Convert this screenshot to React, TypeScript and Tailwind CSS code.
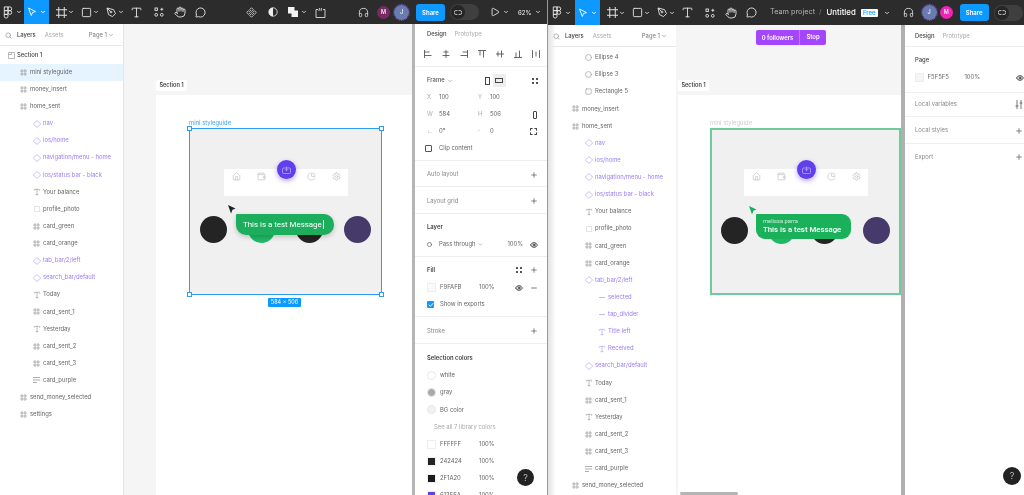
import type { ReactNode } from "react";
import {
  ChevronDown,
  Diamond,
  Type,
  Hand,
  MessageCircle,
  Play,
  Headphones,
  Eye,
  Plus,
  Minus,
  Search,
  Circle,
  Square,
  Home,
  Wallet,
  PieChart,
  Settings,
  Check,
} from "lucide-react";

type Kind = "section" | "frame" | "comp" | "text" | "dash" | "lines" | "ellipse" | "rect" | "line";
type Layer = { name: string; kind: Kind; level: number; purple?: boolean; active?: boolean; dark?: boolean };

const leftLayers: Layer[] = [
  { name: "Section 1", kind: "section", level: 0, dark: true },
  { name: "mini styleguide", kind: "frame", level: 1, active: true },
  { name: "money_insert", kind: "frame", level: 1 },
  { name: "home_sent", kind: "frame", level: 1 },
  { name: "nav", kind: "comp", level: 2, purple: true },
  { name: "ios/home", kind: "comp", level: 2, purple: true },
  { name: "navigation/menu - home", kind: "comp", level: 2, purple: true },
  { name: "ios/status bar - black", kind: "comp", level: 2, purple: true },
  { name: "Your balance", kind: "text", level: 2 },
  { name: "profile_photo", kind: "dash", level: 2 },
  { name: "card_green", kind: "frame", level: 2 },
  { name: "card_orange", kind: "frame", level: 2 },
  { name: "tab_bar/2/left", kind: "comp", level: 2, purple: true },
  { name: "search_bar/default", kind: "comp", level: 2, purple: true },
  { name: "Today", kind: "text", level: 2 },
  { name: "card_sent_1", kind: "frame", level: 2 },
  { name: "Yesterday", kind: "text", level: 2 },
  { name: "card_sent_2", kind: "frame", level: 2 },
  { name: "card_sent_3", kind: "frame", level: 2 },
  { name: "card_purple", kind: "lines", level: 2 },
  { name: "send_money_selected", kind: "frame", level: 1 },
  { name: "settings", kind: "frame", level: 1 },
];

const rightLayers: Layer[] = [
  { name: "Ellipse 4", kind: "ellipse", level: 2 },
  { name: "Ellipse 3", kind: "ellipse", level: 2 },
  { name: "Rectangle 5", kind: "rect", level: 2 },
  { name: "money_insert", kind: "frame", level: 1 },
  { name: "home_sent", kind: "frame", level: 1 },
  { name: "nav", kind: "comp", level: 2, purple: true },
  { name: "ios/home", kind: "comp", level: 2, purple: true },
  { name: "navigation/menu - home", kind: "comp", level: 2, purple: true },
  { name: "ios/status bar - black", kind: "comp", level: 2, purple: true },
  { name: "Your balance", kind: "text", level: 2 },
  { name: "profile_photo", kind: "dash", level: 2 },
  { name: "card_green", kind: "frame", level: 2 },
  { name: "card_orange", kind: "frame", level: 2 },
  { name: "tab_bar/2/left", kind: "comp", level: 2, purple: true },
  { name: "selected", kind: "line", level: 3, purple: true },
  { name: "tap_divider", kind: "line", level: 3, purple: true },
  { name: "Title left", kind: "text", level: 3, purple: true },
  { name: "Received", kind: "text", level: 3, purple: true },
  { name: "search_bar/default", kind: "comp", level: 2, purple: true },
  { name: "Today", kind: "text", level: 2 },
  { name: "card_sent_1", kind: "frame", level: 2 },
  { name: "Yesterday", kind: "text", level: 2 },
  { name: "card_sent_2", kind: "frame", level: 2 },
  { name: "card_sent_3", kind: "frame", level: 2 },
  { name: "card_purple", kind: "lines", level: 2 },
  { name: "send_money_selected", kind: "frame", level: 1 },
];

function Logo() {
  return (
    <svg width="10" height="13" viewBox="0 0 10 14" fill="none" stroke="#e5e5e5" strokeWidth="1">
      <path d="M1 1h4v4H1zM5 1h2a2 2 0 0 1 0 4H5zM1 5h4v4H1zM7 5a2 2 0 1 1 0 4 2 2 0 0 1 0-4zM1 9h4v2a2 2 0 0 1-4 0z" />
    </svg>
  );
}

function MoveIcon() {
  return (
    <svg width="10" height="10" viewBox="0 0 10 10" fill="none" stroke="#fff" strokeWidth="0.9">
      <path d="M1.5 1l7 3.600-3 .9-1.200 3z" />
    </svg>
  );
}

function FrameIcon() {
  return (
    <svg width="11" height="11" viewBox="0 0 10 10" fill="none" stroke="#e5e5e5" strokeWidth="0.9">
      <path d="M2.500 0v10M7.500 0v10M0 2.500h10M0 7.500h10" />
    </svg>
  );
}

function PenIcon() {
  return (
    <svg width="11" height="11" viewBox="0 0 11 11" fill="none" stroke="#e5e5e5" strokeWidth="0.9">
      <path d="M1 1l6.500 1.600 2 4-3 3-4-2zM1 1l3.400 3.400" />
      <circle cx="5" cy="5" r="0.9" />
    </svg>
  );
}

function ResourcesIcon() {
  return (
    <svg width="10" height="10" viewBox="0 0 10 10" fill="none" stroke="#e5e5e5" strokeWidth="0.9">
      <circle cx="2.200" cy="7.800" r="1.400" />
      <circle cx="7.800" cy="7.800" r="1.400" />
      <rect x="1" y="1" width="2.400" height="2.400" />
      <path d="M7.800 0.800v3M6.300 2.300h3" />
    </svg>
  );
}

function ComponentIcon() {
  return (
    <svg width="11" height="11" viewBox="0 0 12 12" fill="none" stroke="#ddd" strokeWidth="0.9">
      <path d="M6 .8l2 2-2 2-2-2zM6 7.200l2 2-2 2-2-2zM2.800 4l2 2-2 2-2-2zM9.200 4l2 2-2 2-2-2z" />
    </svg>
  );
}

function ContrastIcon() {
  return (
    <svg width="10" height="10" viewBox="0 0 10 10">
      <circle cx="5" cy="5" r="4.200" fill="#2c2c2c" stroke="#eee" strokeWidth="0.8" />
      <path d="M5 .8a4.200 4.200 0 0 0 0 8.400z" fill="#eee" />
    </svg>
  );
}

function BoolIcon() {
  return (
    <svg width="10" height="10" viewBox="0 0 10 10" fill="#f2f2f2">
      <rect x="0" y="0" width="6.500" height="6.500" />
      <rect x="3.500" y="3.500" width="6.500" height="6.500" />
    </svg>
  );
}

function CropIcon() {
  return (
    <svg width="11" height="11" viewBox="0 0 11 11" fill="none" stroke="#ddd" strokeWidth="0.9">
      <path d="M1 2.500v8h9V2.500H8M1 2.500h2" />
      <path d="M4.500 1L4 4M6.500 1L6 4" />
    </svg>
  );
}

function SmallChev({ className = "text-[#cfcfcf]" }: { className?: string }) {
  return <ChevronDown size={6} strokeWidth={1} absoluteStrokeWidth className={`shrink-0 ${className}`} />;
}

function Tool({ children, w, chev, blue }: { children: ReactNode; w: string; chev?: boolean; blue?: boolean }) {
  return (
    <div className={`${w} ${blue ? "bg-[#0d99ff]" : ""} h-full flex items-center justify-center gap-[3px] shrink-0`}>
      {children}
      {chev && <SmallChev className={blue ? "text-white" : "text-[#cfcfcf]"} />}
    </div>
  );
}

function ChevTool({ children }: { children: ReactNode }) {
  return (
    <div className="w-[25px] h-full flex items-center pl-[6px] gap-[1px] shrink-0">
      <div className="w-[12px] flex justify-center">{children}</div>
      <SmallChev />
    </div>
  );
}

function ShareBtn() {
  return (
    <div className="w-[29px] h-[17px] rounded-[3px] bg-[#0d99ff] text-white text-[6px] font-semibold flex items-center justify-center shrink-0">
      Share
    </div>
  );
}

function DevToggle() {
  return (
    <div className="w-[29px] h-[16px] rounded-full bg-[#3f3f3f] flex items-center pl-[1px] shrink-0">
      <div className="w-[14px] h-[14px] rounded-full bg-[#262626] flex items-center justify-center">
        <svg width="8" height="5" viewBox="0 0 8 5" fill="none" stroke="#ddd" strokeWidth="0.8">
          <path d="M3.500 .6H2a1.900 1.900 0 0 0 0 3.800h1.500M4.500 .6H6a1.900 1.900 0 0 1 0 3.800H4.500" />
        </svg>
      </div>
    </div>
  );
}

function Avatar({ letter, color, ring }: { letter: string; color: string; ring?: boolean }) {
  return (
    <div
      className={`${color} ${ring ? "w-[15px] h-[15px] outline-1 outline-dotted outline-[#7c4fe0]" : "w-[13px] h-[13px]"} rounded-full text-white text-[5.500px] font-medium flex items-center justify-center shrink-0`}
    >
      {letter}
    </div>
  );
}

function DrawTools() {
  const ic = "text-[#e5e5e5]";
  return (
    <>
      <ChevTool><FrameIcon /></ChevTool>
      <ChevTool><Square size={11} strokeWidth={0.9} absoluteStrokeWidth className={ic} /></ChevTool>
      <ChevTool><PenIcon /></ChevTool>
      <Tool w="w-[24px]"><Type size={13} strokeWidth={0.9} absoluteStrokeWidth className={ic} /></Tool>
      <Tool w="w-[21px]"><ResourcesIcon /></Tool>
      <Tool w="w-[21px]"><Hand size={12} strokeWidth={0.9} absoluteStrokeWidth className={ic} /></Tool>
      <Tool w="w-[21px]"><MessageCircle size={11} strokeWidth={0.9} absoluteStrokeWidth className={ic} /></Tool>
    </>
  );
}

function LeftToolbar() {
  return (
    <div className="h-6 bg-[#2c2c2c] flex items-center shrink-0">
      <Tool w="w-[24px]" chev><Logo /></Tool>
      <Tool w="w-[25px]" chev blue><MoveIcon /></Tool>
      <DrawTools />
      <div className="w-[29px]" />
      <Tool w="w-[22px]"><ComponentIcon /></Tool>
      <Tool w="w-[22px]"><ContrastIcon /></Tool>
      <Tool w="w-[26px]" chev><BoolIcon /></Tool>
      <Tool w="w-[20px]"><CropIcon /></Tool>
      <div className="w-[28px]" />
      <Headphones size={11} strokeWidth={0.9} absoluteStrokeWidth className="text-[#d8d8d8] shrink-0" />
      <div className="w-[8px]" />
      <Avatar letter="M" color="bg-[#7a2a63]" />
      <div className="w-[4px]" />
      <Avatar letter="J" color="bg-[#6a7bb0]" ring />
      <div className="w-[7px]" />
      <ShareBtn />
      <div className="w-[5px]" />
      <DevToggle />
      <div className="w-[11px]" />
      <Play size={10} strokeWidth={0.9} absoluteStrokeWidth className="text-[#e5e5e5] shrink-0" />
      <div className="w-[3px]" />
      <SmallChev />
      <div className="w-[9px]" />
      <span className="text-[#e5e5e5] text-[6px] font-medium shrink-0">62%</span>
      <div className="w-[4px]" />
      <SmallChev />
    </div>
  );
}

function RightToolbar() {
  return (
    <div className="h-[25px] bg-[#2c2c2c] flex items-center shrink-0">
      <Tool w="w-[27px]" chev><Logo /></Tool>
      <Tool w="w-[25px]" chev blue><MoveIcon /></Tool>
      <DrawTools />
      <span className="ml-[8px] text-[#b4b4b4] text-[7.300px] shrink-0">Team project</span>
      <span className="ml-[4px] text-[#777] text-[7px] shrink-0">/</span>
      <span className="ml-[5px] text-white text-[7.800px] font-medium shrink-0">Untitled</span>
      <span className="ml-[5px] w-[17px] h-[8px] rounded-[1px] bg-white text-[#0d99ff] text-[6px] font-medium flex items-center justify-center shrink-0">Free</span>
      <SmallChev className="text-[#cfcfcf] ml-[6px]" />
      <Headphones size={11} strokeWidth={0.9} absoluteStrokeWidth className="text-[#d8d8d8] ml-[13px] shrink-0" />
      <div className="w-[8px]" />
      <Avatar letter="J" color="bg-[#6a7bb0]" ring />
      <div className="w-[3px]" />
      <Avatar letter="M" color="bg-[#f024b4]" />
      <div className="w-[7px]" />
      <ShareBtn />
      <div className="w-[5px]" />
      <DevToggle />
    </div>
  );
}

function LayerIcon({ kind, purple }: { kind: Kind; purple?: boolean }) {
  const c = purple ? "text-[#b9a3f5]" : "text-[#a0a0a0]";
  if (kind === "section")
    return (
      <svg width="7" height="7" viewBox="0 0 7 7" fill="none" stroke="#8a8a8a" strokeWidth="0.6">
        <path d="M.5.5h6v6h-6zM.5 2.500h3v-2" />
      </svg>
    );
  if (kind === "frame")
    return (
      <svg width="7" height="7" viewBox="0 0 7 7" fill="none" stroke="#999" strokeWidth="0.7">
        <path d="M2 0v7M5 0v7M0 2h7M0 5h7" />
      </svg>
    );
  if (kind === "comp") return <Diamond size={8} strokeWidth={0.7} absoluteStrokeWidth className={c} />;
  if (kind === "text") return <Type size={8} strokeWidth={0.7} absoluteStrokeWidth className={c} />;
  if (kind === "ellipse") return <Circle size={7} strokeWidth={0.7} absoluteStrokeWidth className={c} />;
  if (kind === "rect") return <Square size={7} strokeWidth={0.7} absoluteStrokeWidth className={c} />;
  if (kind === "dash")
    return (
      <svg width="6" height="6" viewBox="0 0 6 6" fill="none" stroke="#aaa" strokeWidth="0.6" strokeDasharray="1 1">
        <rect x=".5" y=".5" width="5" height="5" />
      </svg>
    );
  if (kind === "line") return <div className="w-[6px] h-px bg-[#c9b8f7]" />;
  return (
    <svg width="7" height="6" viewBox="0 0 7 6" stroke="#8a8a8a" strokeWidth="0.7">
      <path d="M0 .5h7M0 3h7M0 5.500h4" />
    </svg>
  );
}

function LayerRow({ layer, wide }: { layer: Layer; wide?: boolean }) {
  const col = wide
    ? layer.level === 1
      ? "w-[34px] pl-[21px]"
      : layer.level === 2
        ? "w-[47px] pl-[34px]"
        : "w-[60px] pl-[47px]"
    : layer.level === 0
      ? "w-[17px] pl-[5px]"
      : layer.level === 1
        ? "w-[30px] pl-[17px]"
        : "w-[43px] pl-[30px]";
  return (
    <div
      className={`h-[17.140px] flex items-center shrink-0 ${layer.active ? "bg-[#e5f4ff]" : ""} ${layer.purple ? "text-[#9a7cf0]" : layer.dark ? "text-[#444] font-medium" : "text-[#666]"}`}
    >
      <div className={`${col} flex justify-center`}>
        <LayerIcon kind={layer.kind} purple={layer.purple} />
      </div>
      <span className="text-[5.900px] whitespace-nowrap">{layer.name}</span>
    </div>
  );
}

function LayerTabs() {
  return (
    <div className="h-[22px] border-b border-[#e8e8e8] flex items-center shrink-0 text-[5.900px] pt-px">
      <Search size={7} strokeWidth={0.7} absoluteStrokeWidth className="ml-[5px] text-[#999]" />
      <span className="ml-[5px] font-medium text-[#444]">Layers</span>
      <span className="ml-[9px] text-[#aaa]">Assets</span>
      <span className="ml-auto text-[#777]">Page 1</span>
      <ChevronDown size={6} strokeWidth={0.8} absoluteStrokeWidth className="ml-[1px] mr-[9px] text-[#999]" />
    </div>
  );
}

function Circles({ xs }: { xs: string[] }) {
  const colors = ["bg-[#242424]", "bg-[#20b866]", "bg-[#242424]", "bg-[#463a6b]"];
  return (
    <>
      {xs.map((x, i) => (
        <div key={x} className={`absolute top-[87px] w-[27px] h-[27px] rounded-full ${colors[i]} ${x}`} />
      ))}
    </>
  );
}

function NavBar({ className }: { className: string }) {
  const icon = "text-[#b9b9b9]";
  return (
    <div className={`absolute top-[40px] w-[124px] h-[27px] bg-white flex pt-[3px] ${className}`}>
      <div className="w-[25px] flex justify-center"><Home size={9} strokeWidth={0.6} absoluteStrokeWidth className={icon} /></div>
      <div className="w-[25px] flex justify-center"><Wallet size={9} strokeWidth={0.6} absoluteStrokeWidth className={icon} /></div>
      <div className="w-[25px]" />
      <div className="w-[25px] flex justify-center"><PieChart size={9} strokeWidth={0.6} absoluteStrokeWidth className={icon} /></div>
      <div className="w-[24px] flex justify-center"><Settings size={9} strokeWidth={0.6} absoluteStrokeWidth className={icon} /></div>
      <div className="absolute left-[52.500px] -top-[9px] w-[19px] h-[19px] rounded-full bg-[#613fea] shadow-[0_2px_5px_rgba(97,63,234,0.45)] flex items-center justify-center">
        <ComponentGlyph />
      </div>
    </div>
  );
}

function ComponentGlyph() {
  return (
    <svg width="9" height="8" viewBox="0 0 9 8" fill="none" stroke="#cfc4ff" strokeWidth="0.6">
      <rect x=".5" y="2" width="8" height="5.500" rx="1" />
      <path d="M4.500 .5v4M3 3.200l1.500 1.500L6 3.200" />
    </svg>
  );
}

function Handle({ className }: { className: string }) {
  return <div className={`absolute w-[5px] h-[5px] bg-white border border-[#2f9bf0] ${className}`} />;
}

function SectionLabel({ className }: { className: string }) {
  return (
    <div className={`absolute top-[56px] w-[31px] h-[11px] bg-white rounded-[2px] text-[#444] text-[5.600px] font-semibold flex items-center justify-center ${className}`}>
      Section 1
    </div>
  );
}

function LeftCanvas() {
  return (
    <div className="relative w-[291px] bg-[#f5f5f5] shrink-0 overflow-hidden">
      <div className="absolute left-[32px] top-[71px] right-0 bottom-0 bg-white" />
      <SectionLabel className="left-[32px]" />
      <span className="absolute left-[65px] top-[95px] text-[#3ea3f2] text-[5.900px]">mini styleguide</span>
      <div className="absolute left-[65px] top-[104px] w-[193px] h-[167px] bg-[#f0f0f0] border border-[#2f9bf0]">
        <NavBar className="left-[34px]" />
        <Circles xs={["left-[10px]", "left-[58px]", "left-[106px]", "left-[154px]"]} />
        <div className="absolute left-[46px] top-[85px] w-[98px] h-[21px] bg-[#1cae5c] rounded-[10px] rounded-tl-[1px] shadow-[0_2px_5px_rgba(0,0,0,0.2)] text-white text-[7.900px] flex items-center pl-[7px] font-['Roboto',sans-serif]">
          This is a test Message
          <span className="ml-px w-px h-[9px] bg-white" />
        </div>
        <svg className="absolute left-[38px] top-[76px]" width="8" height="9" viewBox="0 0 8 9" fill="#222">
          <path d="M0 0l7.500 3.500-3 1.200L3 8.500z" />
        </svg>
        <Handle className="-left-[3px] -top-[3px]" />
        <Handle className="-right-[3px] -top-[3px]" />
        <Handle className="-left-[3px] -bottom-[3px]" />
        <Handle className="-right-[3px] -bottom-[3px]" />
      </div>
      <div className="absolute left-[144px] top-[274px] w-[33px] h-[9px] rounded-[1px] bg-[#0d99ff] text-white text-[5.500px] flex items-center justify-center">
        584 × 506
      </div>
      <div className="absolute right-0 top-0 bottom-0 w-[3px] bg-[#b5b5b5]" />
    </div>
  );
}

function RightCanvas() {
  return (
    <div className="relative w-[229px] bg-[#f5f5f5] shrink-0 overflow-hidden">
      <div className="absolute left-[2px] top-[70px] right-0 bottom-0 bg-white" />
      <SectionLabel className="left-[2px] !top-[55px]" />
      <div className="absolute left-[80px] top-[5px] w-[70px] h-[15px] rounded-[2px] bg-[#a445ff] text-white text-[5.900px] font-semibold flex items-center">
        <span className="w-[44px] text-center border-r border-[#c07dff] leading-[15px]">0 followers</span>
        <span className="flex-1 text-center">Stop</span>
      </div>
      <span className="absolute left-[34px] top-[94px] text-[#cfcfcf] text-[5.900px]">mini styleguide</span>
      <div className="absolute left-[34px] top-[103px] w-[191px] h-[167px] bg-[#f0f0f0] border-2 border-[#6fcb9b]">
        <NavBar className="left-[32px] !top-[39px]" />
        <Circles xs={["left-[9px]", "left-[56px]", "left-[99px]", "left-[151px]"]} />
        <div className="absolute left-[44px] top-[84px] w-[95px] h-[25px] bg-[#1ab15a] rounded-[9px] rounded-tl-[1px] text-white flex flex-col justify-center pl-[7px] font-['Roboto',sans-serif]">
          <span className="text-[5.800px] leading-[7px] text-[#cdeedb]">melissa parra</span>
          <span className="text-[7.800px] leading-[10px] font-medium">This is a test Message</span>
        </div>
        <svg className="absolute left-[37px] top-[76px]" width="8" height="9" viewBox="0 0 8 9" fill="#1cae5c">
          <path d="M0 0l7.500 3.500-3 1.200L3 8.500z" />
        </svg>
      </div>
      <div className="absolute right-0 top-0 bottom-0 w-[4px] bg-[#b0b0b0]" />
      <div className="absolute left-[4px] bottom-0 w-[58px] h-[3px] bg-[#b5b5b5] rounded-full" />
    </div>
  );
}

function PanelTabs() {
  return (
    <div className="h-[21px] flex items-center pl-[12px] gap-[8px] text-[5.900px] shrink-0">
      <span className="font-medium text-[#444]">Design</span>
      <span className="text-[#aaa]">Prototype</span>
    </div>
  );
}

function Prop({ label, value, w = "w-[51px]" }: { label: string; value: string; w?: string }) {
  return (
    <div className={`${w} flex items-center`}>
      <span className="w-[12px] text-[#aaa]">{label}</span>
      <span className="text-[#666]">{value}</span>
    </div>
  );
}

function AlignIcon({ d }: { d: string }) {
  return (
    <svg width="8" height="8" viewBox="0 0 8 8" stroke="#444" strokeWidth="0.8" fill="none">
      <path d={d} />
    </svg>
  );
}

function PlusBtn() {
  return <Plus size={8} strokeWidth={0.7} absoluteStrokeWidth className="text-[#555]" />;
}

function EyeBtn() {
  return <Eye size={8} strokeWidth={0.9} absoluteStrokeWidth className="text-[#333]" />;
}

function Head({ title, children, muted }: { title: string; children?: ReactNode; muted?: boolean }) {
  return (
    <div className="h-[17.140px] flex items-center justify-between pl-[12px] pr-[9px] shrink-0">
      <span className={muted ? "text-[#888]" : "text-[#444] font-semibold"}>{title}</span>
      {children}
    </div>
  );
}

function Swatch({ hex, color, opacity = "100%" }: { hex: string; color: string; opacity?: string }) {
  return (
    <div className="h-[17.140px] flex items-center pl-[12px] shrink-0">
      <div className={`w-[9px] h-[9px] border border-[#eee] ${color}`} />
      <span className="ml-[4px] w-[39px] text-[#666]">{hex}</span>
      <span className="text-[#666]">{opacity}</span>
    </div>
  );
}

function ColorStyle({ name, color }: { name: string; color: string }) {
  return (
    <div className="h-[17.140px] flex items-center pl-[12px] shrink-0 text-[#666]">
      <div className={`w-[9px] h-[9px] rounded-full border border-[#e8e8e8] ${color}`} />
      <span className="ml-[4px]">{name}</span>
    </div>
  );
}

function FourDots() {
  return (
    <div className="grid grid-cols-2 gap-[2px]">
      <div className="w-[2px] h-[2px] bg-[#555]" />
      <div className="w-[2px] h-[2px] bg-[#555]" />
      <div className="w-[2px] h-[2px] bg-[#555]" />
      <div className="w-[2px] h-[2px] bg-[#555]" />
    </div>
  );
}

function LeftDesignPanel() {
  return (
    <div className="relative flex-1 bg-white text-[5.900px] overflow-hidden">
      <PanelTabs />
      <div className="h-[22px] border-b border-[#eee] flex items-start pt-[5px] pl-[9px] gap-[10px]">
        <AlignIcon d="M.5 0v8M.5 2h5M.5 5.500h7" />
        <AlignIcon d="M4 0v8M1.500 2h5M.5 5.500h7" />
        <AlignIcon d="M7.500 0v8M2.500 2h5M.5 5.500h7" />
        <AlignIcon d="M0 .5h8M2 .5v5M5.500 .5v7" />
        <AlignIcon d="M0 4h8M2 1.500v5M5.500 .5v7" />
        <AlignIcon d="M0 7.500h8M2 2.500v5M5.500 .5v7" />
        <AlignIcon d="M.5 0v8M7.500 0v8M4 1.500v5" />
      </div>
      <div className="h-[94px] border-b border-[#eee] pt-[5px]">
        <div className="h-[17px] flex items-center pl-[12px] pr-[9px] text-[#555]">
          <span className="font-medium">Frame</span>
          <ChevronDown size={6} strokeWidth={0.8} absoluteStrokeWidth className="ml-[2px] text-[#aaa]" />
          <div className="ml-[32px] w-[5px] h-[8px] border border-[#444]" />
          <div className="ml-[3px] w-[13px] h-[13px] bg-[#eee] rounded-[1px] flex items-center justify-center">
            <div className="w-[8px] h-[5px] border border-[#444]" />
          </div>
          <div className="ml-auto"><FourDots /></div>
        </div>
        <div className="h-[17px] flex items-center pl-[12px]">
          <Prop label="X" value="100" />
          <Prop label="Y" value="100" />
        </div>
        <div className="h-[17px] flex items-center pl-[12px]">
          <Prop label="W" value="584" />
          <Prop label="H" value="506" />
          <div className="ml-auto mr-[10px] w-[4px] h-[8px] border border-[#444] rounded-[1px]" />
        </div>
        <div className="h-[17px] flex items-center pl-[12px]">
          <Prop label="∟" value="0°" />
          <Prop label="◜" value="0" />
          <div className="ml-auto mr-[10px] w-[7px] h-[7px] border border-dashed border-[#444] rounded-[1px]" />
        </div>
        <div className="h-[17px] flex items-center pl-[10px] text-[#666]">
          <div className="w-[7px] h-[7px] border border-[#555] rounded-[1px]" />
          <span className="ml-[7px]">Clip content</span>
        </div>
      </div>
      <div className="h-[26px] border-b border-[#eee] flex items-center pt-[2px]">
        <div className="w-full"><Head title="Auto layout" muted><PlusBtn /></Head></div>
      </div>
      <div className="h-[27px] border-b border-[#eee] flex items-center pt-[2px]">
        <div className="w-full"><Head title="Layout grid" muted><PlusBtn /></Head></div>
      </div>
      <div className="h-[43px] border-b border-[#eee] flex flex-col justify-center pt-[2px]">
        <Head title="Layer" />
        <div className="h-[17px] flex items-center pl-[12px] pr-[9px] text-[#666]">
          <Circle size={5} strokeWidth={0.7} absoluteStrokeWidth className="text-[#666]" />
          <span className="ml-[7px]">Pass through</span>
          <ChevronDown size={5} strokeWidth={0.8} absoluteStrokeWidth className="ml-[2px] text-[#aaa]" />
          <span className="ml-auto mr-[7px]">100%</span>
          <EyeBtn />
        </div>
      </div>
      <div className="h-[60px] border-b border-[#eee] flex flex-col justify-center pt-[2px]">
        <Head title="Fill">
          <div className="flex items-center gap-[8px]">
            <FourDots />
            <PlusBtn />
          </div>
        </Head>
        <div className="relative">
          <Swatch hex="F9FAFB" color="bg-[#f9fafb]" />
          <div className="absolute right-[9px] top-[4.500px] flex items-center gap-[7px]">
            <EyeBtn />
            <Minus size={8} strokeWidth={0.7} absoluteStrokeWidth className="text-[#444]" />
          </div>
        </div>
        <div className="h-[17px] flex items-center pl-[12px] text-[#666]">
          <div className="w-[7px] h-[7px] rounded-[1px] bg-[#0d99ff] flex items-center justify-center">
            <Check size={6} strokeWidth={1} absoluteStrokeWidth className="text-white" />
          </div>
          <span className="ml-[6px]">Show in exports</span>
        </div>
      </div>
      <div className="h-[27px] border-b border-[#eee] flex items-center pt-[2px]">
        <div className="w-full"><Head title="Stroke" muted><PlusBtn /></Head></div>
      </div>
      <div className="pt-[6px]">
        <Head title="Selection colors" />
        <ColorStyle name="white" color="bg-white" />
        <ColorStyle name="gray" color="bg-[#a9a9a9]" />
        <ColorStyle name="BG color" color="bg-[#f2f2f2]" />
        <div className="h-[17.140px] flex items-center pl-[19px] text-[#aaa]">See all 7 library colors</div>
        <Swatch hex="FFFFFF" color="bg-white" />
        <Swatch hex="242424" color="bg-[#242424]" />
        <Swatch hex="2F1A20" color="bg-[#1f1a20]" />
        <Swatch hex="613FEA" color="bg-[#613fea]" />
      </div>
      <div className="absolute left-[102px] top-[445px] w-[17px] h-[17px] rounded-full bg-[#222] text-[#bbb] text-[9px] flex items-center justify-center">?</div>
    </div>
  );
}

function RightDesignPanel() {
  return (
    <div className="relative flex-1 bg-white text-[5.900px] overflow-hidden">
      <div className="h-[22px] border-b border-[#eee] flex items-center pl-[10px] gap-[8px] pt-[1px] shrink-0">
        <span className="font-medium text-[#444]">Design</span>
        <span className="text-[#aaa]">Prototype</span>
      </div>
      <div className="h-[46px] border-b border-[#eee] pt-[5px] pl-[10px]">
        <div className="h-[17px] flex items-center text-[#444] font-medium">Page</div>
        <div className="h-[17px] flex items-center text-[#666]">
          <div className="w-[9px] h-[9px] bg-[#f5f5f5] border border-[#eee]" />
          <span className="ml-[4px] w-[39px]">F5F5F5</span>
          <span>100%</span>
          <div className="ml-[36px]"><EyeBtn /></div>
        </div>
      </div>
      <div className="h-[24px] border-b border-[#eee] flex items-center pl-[10px] pr-[1px] justify-between text-[#888]">
        <span>Local variables</span>
        <svg width="8" height="9" viewBox="0 0 8 9" fill="none" stroke="#555" strokeWidth="0.8">
          <path d="M2 0v9M6 0v9M.5 6h3M4.500 3h3" />
        </svg>
      </div>
      <div className="h-[27px] border-b border-[#eee] flex items-center pl-[10px] pr-[1px] justify-between text-[#888] pt-px">
        <span>Local styles</span>
        <PlusBtn />
      </div>
      <div className="h-[26px] flex items-center pl-[10px] pr-[1px] justify-between text-[#888]">
        <span>Export</span>
        <PlusBtn />
      </div>
      <div className="absolute left-[98px] top-[442px] w-[18px] h-[18px] rounded-full bg-[#222] text-[#bbb] text-[9px] flex items-center justify-center">?</div>
    </div>
  );
}

export default function App() {
  return (
    <div className="w-[1024px] h-[495px] flex overflow-hidden bg-white font-['Inter',sans-serif] blur-[0.3px]">
      {/* first browser window */}
      <div className="w-[548px] h-full flex flex-col shrink-0 border-r border-[#999]">
        <LeftToolbar />
        <div className="flex flex-1 min-h-0">
          <div className="w-[124px] bg-white border-r border-[#e5e5e5] shrink-0 overflow-hidden">
            <LayerTabs />
            <div className="pt-[0.500px]">
              {leftLayers.map((l) => (
                <LayerRow key={l.name} layer={l} />
              ))}
            </div>
          </div>
          <LeftCanvas />
          <LeftDesignPanel />
        </div>
      </div>
      {/* second browser window */}
      <div className="flex-1 h-full flex flex-col min-w-0">
        <RightToolbar />
        <div className="flex flex-1 min-h-0">
          <div className="w-[128px] bg-gradient-to-r from-[#e2e2e2] via-white via-[8px] to-white shrink-0 overflow-hidden">
            <LayerTabs />
            <div className="pt-[2px]">
              {rightLayers.map((l, i) => (
                <LayerRow key={l.name + i} layer={l} wide />
              ))}
            </div>
          </div>
          <RightCanvas />
          <RightDesignPanel />
        </div>
      </div>
    </div>
  );
}
